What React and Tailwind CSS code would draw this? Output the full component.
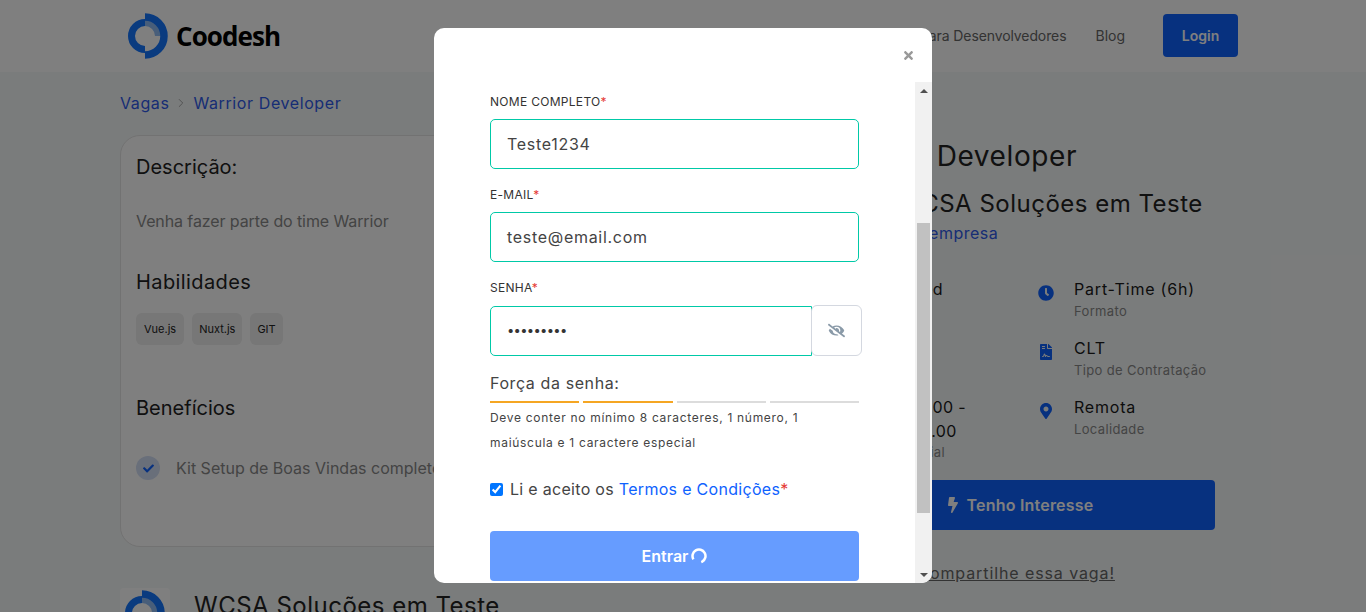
import { FaEyeSlash, FaTimes, FaClock, FaFileContract, FaMapMarkerAlt, FaBolt, FaCheck } from 'react-icons/fa';
import { ChevronRight } from 'lucide-react';

function Logo({ className }) {
  return (
    <svg viewBox="0 0 40 46" className={className}>
      <path d="M17 9.5 A13.5 13.5 0 0 0 17 36.5" fill="none" stroke="#1476fe" strokeWidth="7" />
      <path d="M17 10 A13 13 0 0 1 30 23" fill="none" stroke="#90bdf5" strokeWidth="6" />
      <path d="M17 4 A19 19 0 0 1 17 42" fill="none" stroke="#1476fe" strokeWidth="7.5" />
    </svg>
  );
}

function Field({ label, value }) {
  return (
    <div className="mb-[17px]">
      <label className="block text-[12px] leading-[18px] text-[#333] mb-[8px] tracking-[0.3px]">
        {label}<span className="text-[#e53935]">*</span>
      </label>
      <div className="h-[50px] border border-[#00c9a7] rounded-[5px] flex items-center px-4 text-[16px] text-[#444] tracking-[0.7px]">
        {value}
      </div>
    </div>
  );
}

function Info({ icon, title, sub }) {
  return (
    <div className="flex h-[59px]">
      <div className="w-[36px] pt-[8px] text-[#0f62fe] text-[16px]">{icon}</div>
      <div>
        <div className="text-[16px] leading-[24px] text-[#1a1a1a] tracking-[0.8px]">{title}</div>
        <div className="text-[13px] leading-[20px] text-[#888] tracking-[0.35px]">{sub}</div>
      </div>
    </div>
  );
}

export default function App() {
  return (
    <div className="relative h-[612px] overflow-hidden bg-[#f5f8f8] font-['Inter',sans-serif]">
      {/* Page under the overlay */}
      <header className="h-[72px] bg-white px-[128px] flex items-center">
        <Logo className="w-[40px] h-[46px]" />
        <span className="ml-[8px] font-['Open_Sans',sans-serif] font-bold text-[26px] tracking-[-0.9px] text-black">Coodesh</span>
        <nav className="ml-auto -mt-[2px] flex items-center text-[14px] text-[#666]">
          <span className="mr-[29px] tracking-[-0.1px]">Para Desenvolvedores</span>
          <span className="mr-[38px]">Blog</span>
          <span className="w-[75px] h-[43px] bg-[#0f62fe] rounded-[4px] text-white font-semibold flex items-center justify-center">Login</span>
        </nav>
      </header>

      <main className="px-[120px]">
        <div className="h-[63px] pb-[2px] flex items-center text-[16px] text-[#2f5bea] tracking-[0.6px]">
          <span>Vagas</span>
          <ChevronRight className="mx-[5px] w-[14px] h-[14px] text-[#999]" strokeWidth={1.5} />
          <span>Warrior Developer</span>
        </div>

        <div className="flex h-[412px]">
          <section className="w-[650px] bg-white rounded-[20px] border border-[#e4e4e4] px-[15px] pt-[18px] shrink-0">
            <h2 className="text-[20px] leading-[26px] text-[#222]">Descrição:</h2>
            <p className="mt-[29px] text-[16px] text-[#888] tracking-[-0.1px]">Venha fazer parte do time Warrior</p>
            <h2 className="mt-[36px] text-[20px] leading-[26px] text-[#222] tracking-[0.4px]">Habilidades</h2>
            <div className="mt-[18px] flex gap-[8px] text-[11px] text-[#222]">
              <span className="h-[32px] px-[8px] bg-[#eeeeee] rounded-[6px] flex items-center">Vue.js</span>
              <span className="h-[32px] px-[7px] bg-[#eeeeee] rounded-[6px] flex items-center">Nuxt.js</span>
              <span className="h-[32px] px-[7px] bg-[#eeeeee] rounded-[6px] flex items-center">GIT</span>
            </div>
            <h2 className="mt-[50px] text-[20px] leading-[26px] text-[#222]">Benefícios</h2>
            <div className="mt-[35px] flex items-center">
              <span className="w-[24px] h-[24px] rounded-full bg-[#d3def5] flex items-center justify-center text-[#0f62fe] text-[11px]"><FaCheck /></span>
              <span className="ml-[16px] text-[16px] text-[#888] whitespace-nowrap">Kit Setup de Boas Vindas completo</span>
            </div>
          </section>

          <aside className="ml-[36px] flex-1 pt-[3px]">
            <h1 className="pl-[20px] text-[28px] leading-[36px] text-[#222] tracking-[0.6px] whitespace-nowrap">Warrior Developer</h1>
            <h3 className="mt-[14px] pl-[91px] text-[24px] leading-[32px] text-[#222] tracking-[0.5px] whitespace-nowrap">WCSA Soluções em Teste</h3>
            <div className="pl-[91px] text-[16px] text-[#2f5bea] tracking-[0.5px] mt-[1px]">Ver empresa</div>
            <div className="mt-[32px] grid grid-cols-[232px_1fr]">
              <div className="pl-[54px] text-[16px] text-[#1a1a1a] tracking-[0.3px]">
                <div className="h-[118px] pl-[4px]">Advanced</div>
                <div className="leading-[24px]">R$ 1.000,00 -</div>
                <div className="leading-[24px]">R$ 2.000.00</div>
                <div className="text-[13px] text-[#888]">Faixa Salarial</div>
              </div>
              <div>
                <Info icon={<FaClock />} title="Part-Time (6h)" sub="Formato" />
                <Info icon={<FaFileContract />} title="CLT" sub="Tipo de Contratação" />
                <Info icon={<FaMapMarkerAlt />} title="Remota" sub="Localidade" />
              </div>
            </div>
            <div className="mt-[17px] ml-[17px] h-[50px] w-[392px] bg-[#0f62fe] rounded-[4px] flex items-center justify-center text-white text-[16px] font-semibold tracking-[0.2px]">
              <FaBolt className="mr-[6px]" /> Tenho Interesse
            </div>
            <div className="mt-[31px] pl-[85px] text-[16px] underline text-[#666] tracking-[0.9px] whitespace-nowrap">Ou compartilhe essa vaga!</div>
          </aside>
        </div>

        <div className="mt-[41px] flex items-start">
          <div className="w-[50px] h-[50px] bg-white rounded-[4px] flex items-center justify-center">
            <Logo className="w-[40px] h-[46px]" />
          </div>
          <span className="ml-[24px] text-[24px] leading-[32px] pt-[2px] text-[#222] tracking-[0.5px]">WCSA Soluções em Teste</span>
        </div>
      </main>

      {/* Overlay and modal */}
      <div className="absolute inset-0 bg-black/50" />
      <div className="absolute left-[434px] top-[28px] w-[498px] h-[555px] bg-white rounded-[10px] overflow-hidden flex flex-col">
        <div className="h-[54px] shrink-0 relative">
          <FaTimes className="absolute right-[17px] top-[21px] text-[13px] text-[#999]" />
        </div>
        <div className="flex-1 flex min-h-0">
          <div className="flex-1 overflow-hidden pl-[56px] pr-[56px] pt-[11px]">
            <Field label="NOME COMPLETO" value="Teste1234" />
            <Field label="E-MAIL" value="teste@email.com" />

            <label className="block text-[12px] leading-[18px] text-[#333] mb-[9px] tracking-[0.3px]">
              SENHA<span className="text-[#e53935]">*</span>
            </label>
            <div className="flex">
              <div className="h-[50px] flex-1 border border-[#00c9a7] rounded-l-[5px] flex items-center px-4 text-[13px] text-[#333] tracking-[-0.7px]">•••••••••</div>
              <div className="h-[51px] w-[51px] -mt-[1px] -ml-[1px] -mr-[3px] bg-white border border-[#d4d8e0] rounded-[6px] flex items-center justify-center text-[#8a9aa8] text-[17px]">
                <FaEyeSlash />
              </div>
            </div>

            <div className="mt-[15px] text-[16px] leading-[24px] text-[#444] tracking-[0.6px]">Força da senha:</div>
            <div className="mt-[6px] grid grid-cols-4 gap-[4px]">
              <div className="h-[2px] bg-[#f5a623]" />
              <div className="h-[2px] bg-[#f5a623]" />
              <div className="h-[2px] bg-[#dcdcdc]" />
              <div className="h-[2px] bg-[#dcdcdc]" />
            </div>
            <p className="mt-[3px] text-[12px] leading-[24.5px] text-[#444] tracking-[0.7px]">
              Deve conter no mínimo 8 caracteres, 1 número, 1 maiúscula e 1 caractere especial
            </p>

            <div className="mt-[22px] flex items-center h-[24px]">
              <input type="checkbox" defaultChecked className="w-[13px] h-[13px] m-0 accent-[#0075ff]" />
              <span className="ml-[7px] text-[16px] text-[#444] tracking-[0.3px]">
                Li e aceito os <span className="text-[#0f62fe]">Termos e Condições</span><span className="text-[#e53935]">*</span>
              </span>
            </div>

            <div className="mt-[30px] h-[50px] bg-[#669cff] rounded-[4px] flex items-center justify-center text-white text-[16px] font-semibold">
              Entrar
              <svg viewBox="0 0 16 16" className="ml-[3px] w-[16px] h-[16px]">
                <circle cx="8" cy="8" r="6.5" fill="none" stroke="white" strokeWidth="2.5" strokeDasharray="31 10" transform="rotate(150 8 8)" />
              </svg>
            </div>
          </div>

          {/* Scrollbar */}
          <div className="w-[17px] shrink-0 bg-[#f1f1f1] flex flex-col items-center relative">
            <div className="h-[17px] w-full flex items-center justify-center">
              <div className="w-0 h-0 border-x-[4px] border-x-transparent border-b-[4px] border-b-[#505050]" />
            </div>
            <div className="mt-[124px] h-[290px] w-[13px] bg-[#c1c1c1]" />
            <div className="mt-auto h-[17px] w-full flex items-center justify-center">
              <div className="w-0 h-0 border-x-[4px] border-x-transparent border-t-[4px] border-t-[#505050]" />
            </div>
          </div>
        </div>
      </div>
    </div>
  );
}
